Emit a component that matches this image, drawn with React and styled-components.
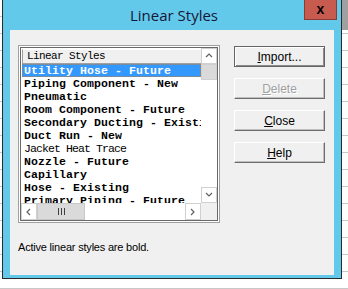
import React from 'react'
import styled, { createGlobalStyle } from 'styled-components'

const GlobalStyle = createGlobalStyle`
  html, body {
    margin: 0;
    padding: 0;
    background: #ffffff;
  }
  body {
    width: 348px;
    height: 289px;
    overflow: hidden;
    background:
      linear-gradient(#a0a0a0, #a0a0a0) right top / 6px 30px no-repeat,
      repeating-linear-gradient(#ffffff 0 16px, #c8c8c8 16px 17px);
  }
`

const rows = [
  { name: 'Utility Hose - Future', bold: true, selected: true },
  { name: 'Piping Component - New', bold: true },
  { name: 'Pneumatic', bold: true },
  { name: 'Room Component - Future', bold: true },
  { name: 'Secondary Ducting - Existing', bold: true },
  { name: 'Duct Run - New', bold: true },
  { name: 'Jacket Heat Trace', bold: false },
  { name: 'Nozzle - Future', bold: true },
  { name: 'Capillary', bold: true },
  { name: 'Hose - Existing', bold: true },
  { name: 'Primary Piping - Future', bold: true },
]

/** dialog frame */
const Window = styled.div`
  margin-left: 2px;
  width: 338px;
  height: 278px;
  background: #63c9ea;
  border: 1px solid #2b2b2b;
  border-top: none;
  display: flex;
  flex-direction: column;
`
const TitleBar = styled.div`
  height: 30px;
  display: grid;
  grid-template-columns: 1fr auto;
  align-items: start;
`
const Title = styled.div`
  grid-column: 1 / 3;
  grid-row: 1;
  text-align: center;
  font-family: "Open Sans", "Noto Sans", sans-serif;
  font-size: 15px;
  line-height: 30px;
  color: #16163a;
  padding-left: 4px;
`
const CloseBtn = styled.div`
  grid-column: 2;
  grid-row: 1;
  margin-right: 4px;
  width: 33px;
  height: 20px;
  background: #c75b50;
  border: 1px solid #8c3a33;
  border-top: none;
  display: flex;
  align-items: center;
  justify-content: center;
  font-family: "Liberation Sans", sans-serif;
  font-weight: bold;
  font-size: 14px;
  color: #000;
  line-height: 1;
  padding-bottom: 2px;
  box-sizing: border-box;
`
const Client = styled.div`
  margin: 0 7px 3px 7px;
  flex: 1;
  background: #f0f0f0;
  padding: 15px 8px 0 8px;
  box-sizing: border-box;
`
const Row = styled.div`
  display: flex;
  gap: 14px;
`
const ListFrame = styled.div`
  width: 202px;
  height: 178px;
  box-sizing: border-box;
  border: 1px solid #a0a0a0;
  padding: 1px;
  background: #ffffff;
`
const ListInner = styled.div`
  height: 100%;
  box-sizing: border-box;
  border: 1px solid #696969;
  display: grid;
  grid-template-columns: 1fr 16px;
  grid-template-rows: 1fr 17px;
  background: #ffffff;
`
const ListBody = styled.div`
  overflow: hidden;
  padding-top: 1px;
`
const Header = styled.div`
  height: 15px;
  margin-left: 1px;
  box-sizing: border-box;
  border-top: 1px solid #ffffff;
  border-left: 1px solid #a0a0a0;
  border-bottom: 1px solid #a0a0a0;
  background: #f0f0f0;
  font-family: "Liberation Mono", monospace;
  font-size: 11px;
  letter-spacing: -0.6px;
  line-height: 13px;
  padding-left: 4px;
  color: #000;
  white-space: nowrap;
`
const Item = styled.div`
  height: 13px;
  margin-left: 1px;
  padding-left: 2px;
  box-sizing: border-box;
  font-family: "Liberation Mono", monospace;
  font-size: 11.5px;
  line-height: 13px;
  white-space: nowrap;
  font-weight: ${p => (p.$bold ? 'bold' : 'normal')};
  letter-spacing: ${p => (p.$bold ? '0.1px' : '-0.9px')};
  color: ${p => (p.$selected ? '#ffffff' : '#000000')};
  background: ${p => (p.$selected ? '#3399ff' : 'transparent')};
  outline: ${p => (p.$selected ? '1px dotted #c08040' : 'none')};
  outline-offset: -1px;
`
const VScroll = styled.div`
  display: flex;
  flex-direction: column;
  background: #ffffff;
`
const ArrowBtn = styled.div`
  width: ${p => p.$w || '16px'};
  height: ${p => p.$h || '16px'};
  box-sizing: border-box;
  border: 1px solid #d0d0d0;
  background: #ffffff;
  display: flex;
  align-items: center;
  justify-content: center;
  flex-shrink: 0;
`
const VThumb = styled.div`
  height: 16px;
  background: #dadada;
  border: 1px solid #d0d0d0;
  box-sizing: border-box;
`
const Spacer = styled.div`
  flex: 1;
`
const HScroll = styled.div`
  display: flex;
  background: #ffffff;
`
const HThumb = styled.div`
  width: 48px;
  height: 17px;
  box-sizing: border-box;
  background: #dadada;
  border: 1px solid #c8c8c8;
  display: flex;
  align-items: center;
  justify-content: center;
`
const Corner = styled.div`
  background: #f0f0f0;
`
const Buttons = styled.div`
  display: flex;
  flex-direction: column;
  gap: 11px;
  padding-top: 1px;
`
const Button = styled.div`
  width: 91px;
  height: 21px;
  box-sizing: border-box;
  background: #f0f0f0;
  border: 1px solid;
  border-color: ${p => (p.$default ? '#646464' : '#ffffff #6d6d6d #6d6d6d #ffffff')};
  box-shadow: ${p => (p.$default ? 'inset 1px 1px #ffffff, inset -1px -1px #8a8a8a' : 'inset -1px -1px #c0c0c0')};
  display: flex;
  align-items: center;
  justify-content: center;
  font-family: "Liberation Sans", Arial, sans-serif;
  font-size: 12px;
  color: ${p => (p.$disabled ? '#a0a0a0' : '#000000')};
  ${p => p.$disabled && 'text-shadow: 1px 1px #ffffff;'}
`
const Note = styled.div`
  margin-top: 18px;
  font-family: "Liberation Sans", Arial, sans-serif;
  font-size: 11px;
  letter-spacing: -0.2px;
  color: #000;
`

const Chevron = ({ dir }) => {
  const pts = {
    up: '1,5 4,2 7,5',
    down: '1,2 4,5 7,2',
    left: '5,1 2,4 5,7',
    right: '2,1 5,4 2,7',
  }[dir]
  return (
    <svg width="8" height="8" viewBox="0 0 8 8">
      <polyline points={pts} fill="none" stroke="#606060" strokeWidth="1.2" />
    </svg>
  )
}

const Grip = () => (
  <svg width="9" height="7" viewBox="0 0 9 7">
    <rect x="1" y="0" width="1" height="7" fill="#404040" />
    <rect x="4" y="0" width="1" height="7" fill="#404040" />
    <rect x="7" y="0" width="1" height="7" fill="#404040" />
  </svg>
)

export default function App() {
  return (
    <>
      <GlobalStyle />
      <Window>
        <TitleBar>
          <Title>Linear Styles</Title>
          <CloseBtn>x</CloseBtn>
        </TitleBar>
        <Client>
          <Row>
            <ListFrame>
              <ListInner>
                <ListBody>
                  <Header>Linear Styles</Header>
                  {rows.map(r => (
                    <Item key={r.name} $bold={r.bold} $selected={r.selected}>{r.name}</Item>
                  ))}
                </ListBody>
                <VScroll>
                  <ArrowBtn><Chevron dir="up" /></ArrowBtn>
                  <VThumb />
                  <Spacer />
                  <ArrowBtn><Chevron dir="down" /></ArrowBtn>
                </VScroll>
                <HScroll>
                  <ArrowBtn $h="17px"><Chevron dir="left" /></ArrowBtn>
                  <HThumb><Grip /></HThumb>
                  <Spacer />
                  <ArrowBtn $h="17px"><Chevron dir="right" /></ArrowBtn>
                </HScroll>
                <Corner />
              </ListInner>
            </ListFrame>
            <Buttons>
              <Button $default><u>I</u>mport...</Button>
              <Button $disabled><u>D</u>elete</Button>
              <Button><u>C</u>lose</Button>
              <Button><u>H</u>elp</Button>
            </Buttons>
          </Row>
          <Note>Active linear styles are bold.</Note>
        </Client>
      </Window>
    </>
  )
}
